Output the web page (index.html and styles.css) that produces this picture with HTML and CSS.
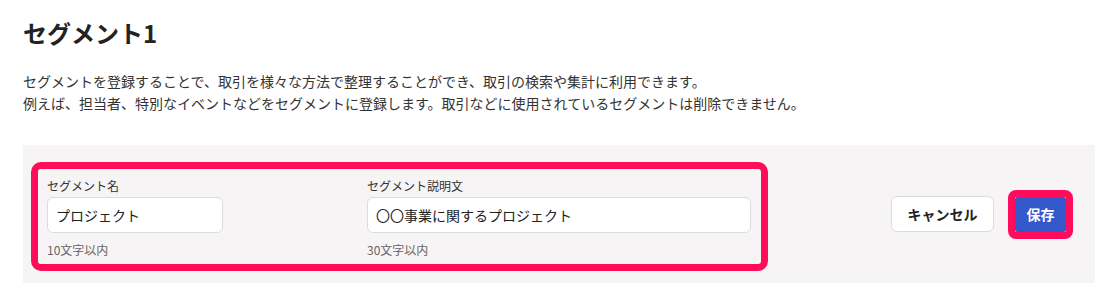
FILE: index.html
```html
<!DOCTYPE html>
<html lang="ja">
<head>
<meta charset="utf-8">
<link rel="stylesheet" href="styles.css">
</head>
<body>
<div class="page">
  <h1 class="title">セグメント1</h1>
  <p class="desc">セグメントを登録することで、取引を様々な方法で整理することができ、取引の検索や集計に利用できます。<br>例えば、担当者、特別なイベントなどをセグメントに登録します。取引などに使用されているセグメントは削除できません。</p>
  <div class="panel">
    <div class="fields">
      <div class="field field-name">
        <label class="label">セグメント名</label>
        <input class="input" type="text" value="プロジェクト">
        <div class="hint">10文字以内</div>
      </div>
      <div class="field field-desc">
        <label class="label">セグメント説明文</label>
        <input class="input" type="text" value="〇〇事業に関するプロジェクト">
        <div class="hint">30文字以内</div>
      </div>
    </div>
    <div class="actions">
      <button class="btn btn-cancel">キャンセル</button>
      <div class="save-mark"><button class="btn btn-save">保存</button></div>
    </div>
  </div>
</div>
</body>
</html>
```

FILE: styles.css
```css
* { box-sizing: border-box; }
html, body { margin: 0; padding: 0; background: #fff; }
body {
  font-family: "Noto Sans CJK JP", "Noto Sans", sans-serif;
  color: #222;
}
.page { padding: 18px 22px 0 23px; }
.title {
  margin: 0;
  font-size: 24px;
  line-height: 30px;
  font-weight: 700;
  color: #222;
}
.desc {
  margin: 22px 0 0;
  font-size: 14px;
  line-height: 22px;
  color: #333;
}
.panel {
  margin-top: 31px;
  background: #f6f4f5;
  height: 138px;
  padding: 17px 22px 12px 8px;
  display: flex;
  justify-content: space-between;
}
.fields {
  display: flex;
  gap: 144px;
  border: 7px solid #ff0d5b;
  border-radius: 10px;
  padding: 8px 10px 5px 9px;
  width: 737px;
  height: 109px;
}
.field { display: flex; flex-direction: column; }
.field-name { width: 176px; }
.field-desc { width: 384px; }
.label {
  font-size: 12px;
  line-height: 18px;
  color: #333;
  margin-bottom: 2px;
}
.input {
  height: 36px;
  width: 100%;
  border: 1px solid #dcdcdc;
  border-radius: 6px;
  background: #fff;
  padding: 0 8px;
  font-family: inherit;
  font-size: 14px;
  color: #222;
  outline: none;
}
.hint {
  margin-top: 8px;
  font-size: 12px;
  line-height: 18px;
  color: #666;
}
.actions {
  display: flex;
  align-items: center;
  align-self: center;
  margin-bottom: 5px;
  gap: 14px;
}
.btn {
  font-family: inherit;
  font-weight: 700;
  font-size: 14px;
  cursor: pointer;
}
.btn-cancel {
  width: 103px;
  height: 36px;
  background: #fff;
  border: 1px solid #dcdcdc;
  border-radius: 6px;
  color: #222;
  padding: 0;
}
.save-mark {
  border: 7px solid #ff0d5b;
  border-radius: 8px;
  display: flex;
}
.btn-save {
  width: 51px;
  height: 35px;
  background: #3358cc;
  color: #fff;
  border: none;
  border-radius: 2px;
  padding: 0;
}
```
